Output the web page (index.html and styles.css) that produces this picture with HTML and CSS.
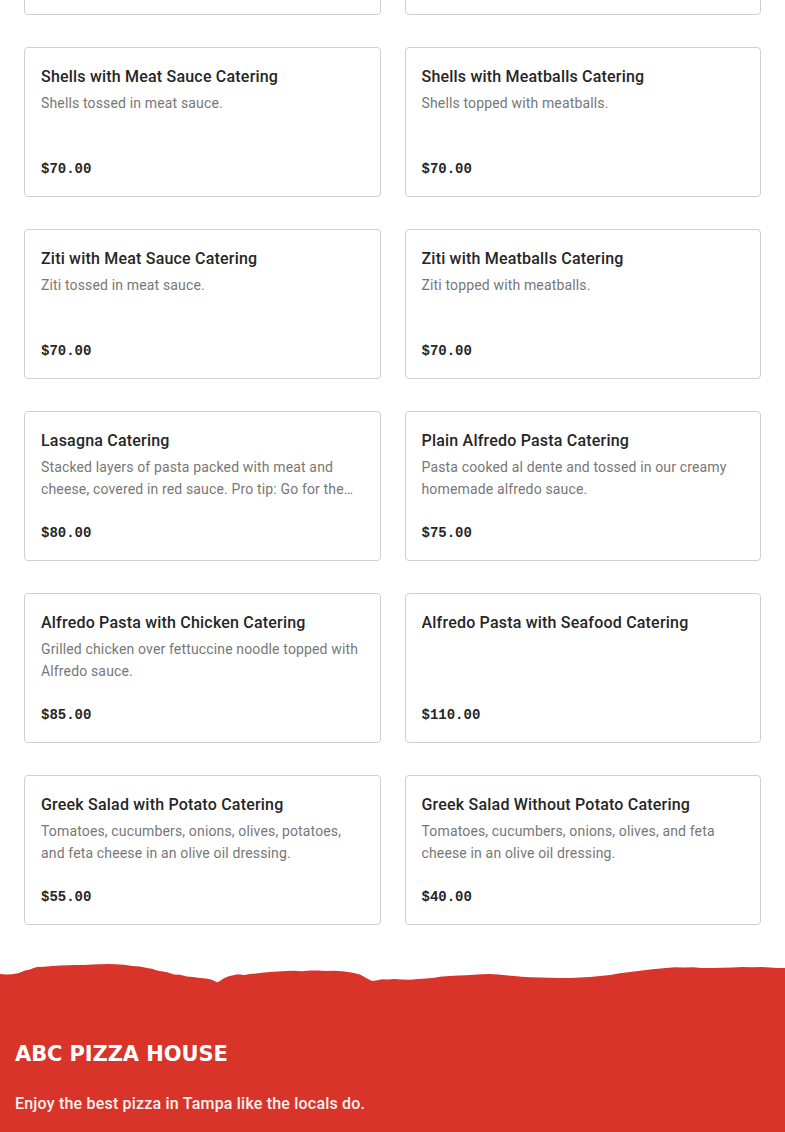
FILE: index.html
```
<!DOCTYPE html>
<html lang="en">
<head>
<meta charset="utf-8">
<title>Catering Menu</title>
<link rel="stylesheet" href="styles.css">
</head>
<body>
<main class="menu">
  <div class="grid">
    <article class="card">
      <h3 class="card-title">Baked Ziti Catering</h3>
      <p class="card-desc">Ziti baked with ricotta, mozzarella and red sauce.</p>
      <div class="card-price">$70.00</div>
    </article>
    <article class="card">
      <h3 class="card-title">Spaghetti with Meatballs Catering</h3>
      <p class="card-desc">Spaghetti topped with meatballs.</p>
      <div class="card-price">$70.00</div>
    </article>
    <article class="card">
      <h3 class="card-title">Shells with Meat Sauce Catering</h3>
      <p class="card-desc">Shells tossed in meat sauce.</p>
      <div class="card-price">$70.00</div>
    </article>
    <article class="card">
      <h3 class="card-title">Shells with Meatballs Catering</h3>
      <p class="card-desc">Shells topped with meatballs.</p>
      <div class="card-price">$70.00</div>
    </article>
    <article class="card">
      <h3 class="card-title">Ziti with Meat Sauce Catering</h3>
      <p class="card-desc">Ziti tossed in meat sauce.</p>
      <div class="card-price">$70.00</div>
    </article>
    <article class="card">
      <h3 class="card-title">Ziti with Meatballs Catering</h3>
      <p class="card-desc">Ziti topped with meatballs.</p>
      <div class="card-price">$70.00</div>
    </article>
    <article class="card">
      <h3 class="card-title">Lasagna Catering</h3>
      <p class="card-desc">Stacked layers of pasta packed with meat and cheese, covered in red sauce. Pro tip: Go for the garlic bread on the side.</p>
      <div class="card-price">$80.00</div>
    </article>
    <article class="card">
      <h3 class="card-title">Plain Alfredo Pasta Catering</h3>
      <p class="card-desc">Pasta cooked al dente and tossed in our creamy homemade alfredo sauce.</p>
      <div class="card-price">$75.00</div>
    </article>
    <article class="card">
      <h3 class="card-title">Alfredo Pasta with Chicken Catering</h3>
      <p class="card-desc">Grilled chicken over fettuccine noodle topped with Alfredo sauce.</p>
      <div class="card-price">$85.00</div>
    </article>
    <article class="card">
      <h3 class="card-title">Alfredo Pasta with Seafood Catering</h3>
      <p class="card-desc"></p>
      <div class="card-price">$110.00</div>
    </article>
    <article class="card">
      <h3 class="card-title">Greek Salad with Potato Catering</h3>
      <p class="card-desc">Tomatoes, cucumbers, onions, olives, potatoes, and feta cheese in an olive oil dressing.</p>
      <div class="card-price">$55.00</div>
    </article>
    <article class="card">
      <h3 class="card-title">Greek Salad Without Potato Catering</h3>
      <p class="card-desc">Tomatoes, cucumbers, onions, olives, and feta cheese in an olive oil dressing.</p>
      <div class="card-price">$40.00</div>
    </article>
  </div>
</main>
<footer class="footer">
  <svg class="torn" viewBox="0 960 785 26" preserveAspectRatio="none" aria-hidden="true">
    <path fill="#d9342a" d="M0 975 L6 975.6 L12 975.2 L18 974.3 L22 972.8 L25 971.6 L29 970.8 L33 969.2 L37 968.1 L44 967.8 L52 967.1 L60 966.6 L68 966.2 L76 965.9 L84 966.1 L92 965.4 L100 965.2 L108 964.9 L116 965.3 L124 965.8 L132 966.9 L140 967.6 L147 969.1 L152 969.7 L158 971.8 L163 972.4 L168 973.6 L174 975.4 L180 975.8 L187 977.6 L193 978.1 L200 978.9 L206 979.4 L211 980.4 L214 981.8 L217 983.2 L220 982 L223 979.8 L228 977.6 L233 976.3 L238 975.2 L244 975.9 L250 975.1 L256 974.6 L262 973.8 L270 972.9 L278 972.4 L286 972.1 L294 971.8 L302 972.2 L310 971.6 L318 971.4 L326 971.9 L334 971.7 L342 972.2 L348 972.9 L354 974.1 L360 975.6 L364 977.8 L368 980.1 L372 982.1 L376 981.6 L382 980.3 L388 980.6 L394 980.1 L402 980.4 L410 980.7 L418 980 L426 979.6 L434 978.8 L442 977.6 L450 977.1 L458 976.4 L466 976.2 L474 975.7 L482 975.3 L490 975.1 L498 975.4 L506 976.3 L514 977 L522 977.7 L530 978.2 L540 978.4 L550 978.7 L560 978.9 L570 979.1 L580 978.6 L590 978.1 L600 977 L610 975.9 L620 974.3 L630 973.1 L640 971.8 L650 970.6 L658 969.8 L666 968.9 L675 968.2 L684 968.6 L693 968.3 L702 968.9 L712 969.1 L722 968.8 L732 968.4 L742 968.1 L752 968.3 L762 967.9 L770 968.5 L778 968.9 L785 969 L785 986 L0 986 Z"/>
  </svg>
  <div class="footer-body">
    <h2 class="brand">ABC PIZZA HOUSE</h2>
    <p class="tagline">Enjoy the best pizza in Tampa like the locals do.</p>
  </div>
</footer>
</body>
</html>
```
FILE: styles.css
```
* { box-sizing: border-box; }
html, body { margin: 0; padding: 0; background: #fff; }
body {
  font-family: "Roboto", "Liberation Sans", sans-serif;
  color: #262626;
  overflow: hidden;
  height: 1132px;
}
.menu {
  padding: 0 24px;
}
.grid {
  margin-top: -135px;
  display: grid;
  grid-template-columns: 1fr 1fr;
  column-gap: 24px;
  row-gap: 32px;
}
.card {
  height: 150px;
  border: 1px solid #cfcfcf;
  border-radius: 4px;
  padding: 17px 16px 17px;
  display: flex;
  flex-direction: column;
}
.card-title {
  margin: 0;
  font-size: 16px;
  line-height: 24px;
  font-weight: 500;
  letter-spacing: 0.2px;
  color: #262626;
  white-space: nowrap;
  overflow: hidden;
  text-overflow: ellipsis;
}
.card-desc {
  margin: 3px 0 0;
  font-size: 14px;
  line-height: 22px;
  color: #777;
  letter-spacing: 0.15px;
  display: -webkit-box;
  -webkit-line-clamp: 2;
  -webkit-box-orient: vertical;
  overflow: hidden;
}
.card-price {
  margin-top: auto;
  font-family: "Liberation Mono", "DejaVu Sans Mono", monospace;
  font-weight: 700;
  font-size: 14px;
  line-height: 20px;
  color: #262626;
}
.footer {
  margin-top: 34px;
}
.torn {
  display: block;
  width: 100%;
  height: 26px;
}
.footer-body {
  background: #d9342a;
  margin-top: -1px;
  padding: 56px 15px 40px;
  color: #fff;
}
.brand {
  margin: 0;
  font-family: "DejaVu Sans", "Liberation Sans", sans-serif;
  font-weight: 700;
  font-size: 21px;
  line-height: 28px;
  letter-spacing: -0.1px;
  color: #fff;
}
.tagline {
  margin: 24px 0 0;
  font-family: "Roboto", "Liberation Sans", sans-serif;
  font-weight: 500;
  font-size: 16px;
  line-height: 24px;
  letter-spacing: 0.2px;
  color: #fdf1ef;
}
```
